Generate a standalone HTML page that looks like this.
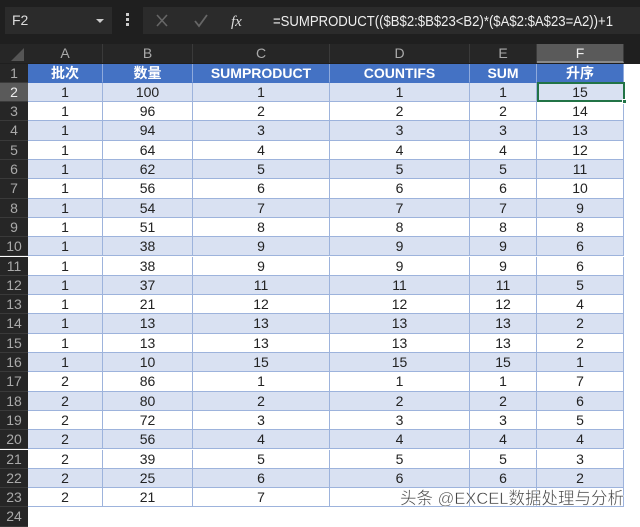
<!DOCTYPE html>
<html><head><meta charset="utf-8">
<style>
*{margin:0;padding:0;box-sizing:border-box}
body{width:640px;height:522px;background:#fff;overflow:hidden;position:relative;font-family:"Liberation Sans","Noto Sans CJK SC",sans-serif}
#top{position:absolute;left:0;top:0;width:640px;height:63.5px;background:#1f1f1f}
.box{position:absolute;background:#2b2b2b;top:7px;height:27px}
#nb{left:5px;width:107px;color:#ddd;font-size:14px;line-height:27px;padding-left:7px}
#nb:after{content:"";position:absolute;right:8px;top:12px;border-left:4px solid transparent;border-right:4px solid transparent;border-top:4px solid #ccc}
#dots{position:absolute;left:126px;top:13px;width:3px}
#dots i{display:block;width:3px;height:3px;background:#ccc;margin-bottom:2px}
#ic{left:143px;width:115px}
#fx{left:258px;width:382px}
.ch{position:absolute;top:44px;height:19px;color:#aaa;font-size:14px;text-align:center;line-height:19px;border-right:1px solid #3a3a3a}
.rh{position:absolute;left:0;width:28px;background:#262626;color:#aaa;font-size:14px;text-align:center;border-bottom:1px solid #3a3a3a}
.c{position:absolute;font-size:14px;color:#222;text-align:center;border-right:1px solid #9db3dc;border-bottom:1px solid #9db3dc}
.h{background:#4472c4;color:#fff;font-weight:bold;border-color:#4472c4;border-right-color:#8faadc}
.e{background:#d9e1f2}
#wm{position:absolute;left:398px;top:486px}
</style></head><body>
<div id="top">
<div class="box" id="nb">F2</div>
<div id="dots"><i></i><i></i><i></i></div>
<div class="box" id="ic">
<svg width="115" height="27"><path d="M14 8l10 11M24 8l-10 11" stroke="#666" stroke-width="1.6"/><path d="M52 14l4 5 8-11" stroke="#666" stroke-width="1.8" fill="none"/><text x="88" y="19" fill="#ddd" font-size="15" font-style="italic" font-family="Liberation Serif,serif">fx</text></svg>
</div>
<div class="box" id="fx"><svg width="382" height="27"><text x="15" y="19" fill="#eee" font-size="14.5" textLength="340" lengthAdjust="spacingAndGlyphs" font-family="Liberation Sans,sans-serif">=SUMPRODUCT(($B$2:$B$23&lt;B2)*($A$2:$A$23=A2))+1</text></svg></div>
<div style="position:absolute;left:0;top:44px;width:28px;height:19px;background:#262626"><svg width="28" height="19"><path d="M24 4L24 17 11 17Z" fill="#555"/></svg></div>
<div class="ch" style="left:28px;width:75px;background:#262626">A</div>
<div class="ch" style="left:103px;width:90px;background:#262626">B</div>
<div class="ch" style="left:193px;width:137px;background:#262626">C</div>
<div class="ch" style="left:330px;width:140px;background:#262626">D</div>
<div class="ch" style="left:470px;width:67px;background:#262626">E</div>
<div class="ch" style="left:537px;width:87px;background:#5a5a5a;color:#eee;border-bottom:2px solid #8a8a8a">F</div>
</div>
<div id="grid"></div>
<svg id="wm" width="230" height="24"><text x="2" y="18" fill="#444" stroke="#fff" stroke-width="0.4" font-size="17" textLength="224" lengthAdjust="spacingAndGlyphs" font-family="Liberation Sans,Noto Sans CJK SC,sans-serif">头条 @EXCEL数据处理与分析</text></svg>
<script>
var L=[28,103,193,330,470,537],W=[75,90,137,140,67,87];
var B=[100,96,94,64,62,56,54,51,38,38,37,21,13,13,10,86,80,72,56,39,25,21],
C=[1,2,3,4,5,6,7,8,9,9,11,12,13,13,15,1,2,3,4,5,6,7],
F=[15,14,13,12,11,10,9,8,6,6,5,4,2,2,1,7,6,5,4,3,2,1];
var h='',H=19.3,T=63.5;
for(var r=0;r<24;r++){var t=T+r*H;
var bg=r==1?'#5a5a5a':'#262626',col=r==1?'#eee':'#aaa';
h+='<div class="rh" style="top:'+t+'px;height:'+H+'px;line-height:'+H+'px;background:'+bg+';color:'+col+'">'+(r+1)+'</div>';
if(r>=23)continue;
var v;
if(r==0)v=['批次','数量','SUMPRODUCT','COUNTIFS','SUM','升序'];
else{var i=r-1;v=[i<15?1:2,B[i],C[i],C[i],C[i],F[i]];if(r==22){v[3]='';v[4]='';v[5]='';}}
for(var c=0;c<6;c++){var cls='c'+(r==0?' h':(r%2==1?' e':''));
h+='<div class="'+cls+'" style="left:'+L[c]+'px;top:'+t+'px;width:'+W[c]+'px;height:'+H+'px;line-height:'+(H-1)+'px">'+v[c]+'</div>';}
}
h+='<div style="position:absolute;left:537px;top:'+(T+H-1)+'px;width:88px;height:'+(H+1)+'px;border:2px solid #217346"></div>';
h+='<div style="position:absolute;left:622px;top:'+(T+2*H-3)+'px;width:5px;height:5px;background:#217346;border:1px solid #fff"></div>';
document.getElementById('grid').innerHTML=h;
</script>
</body></html>
